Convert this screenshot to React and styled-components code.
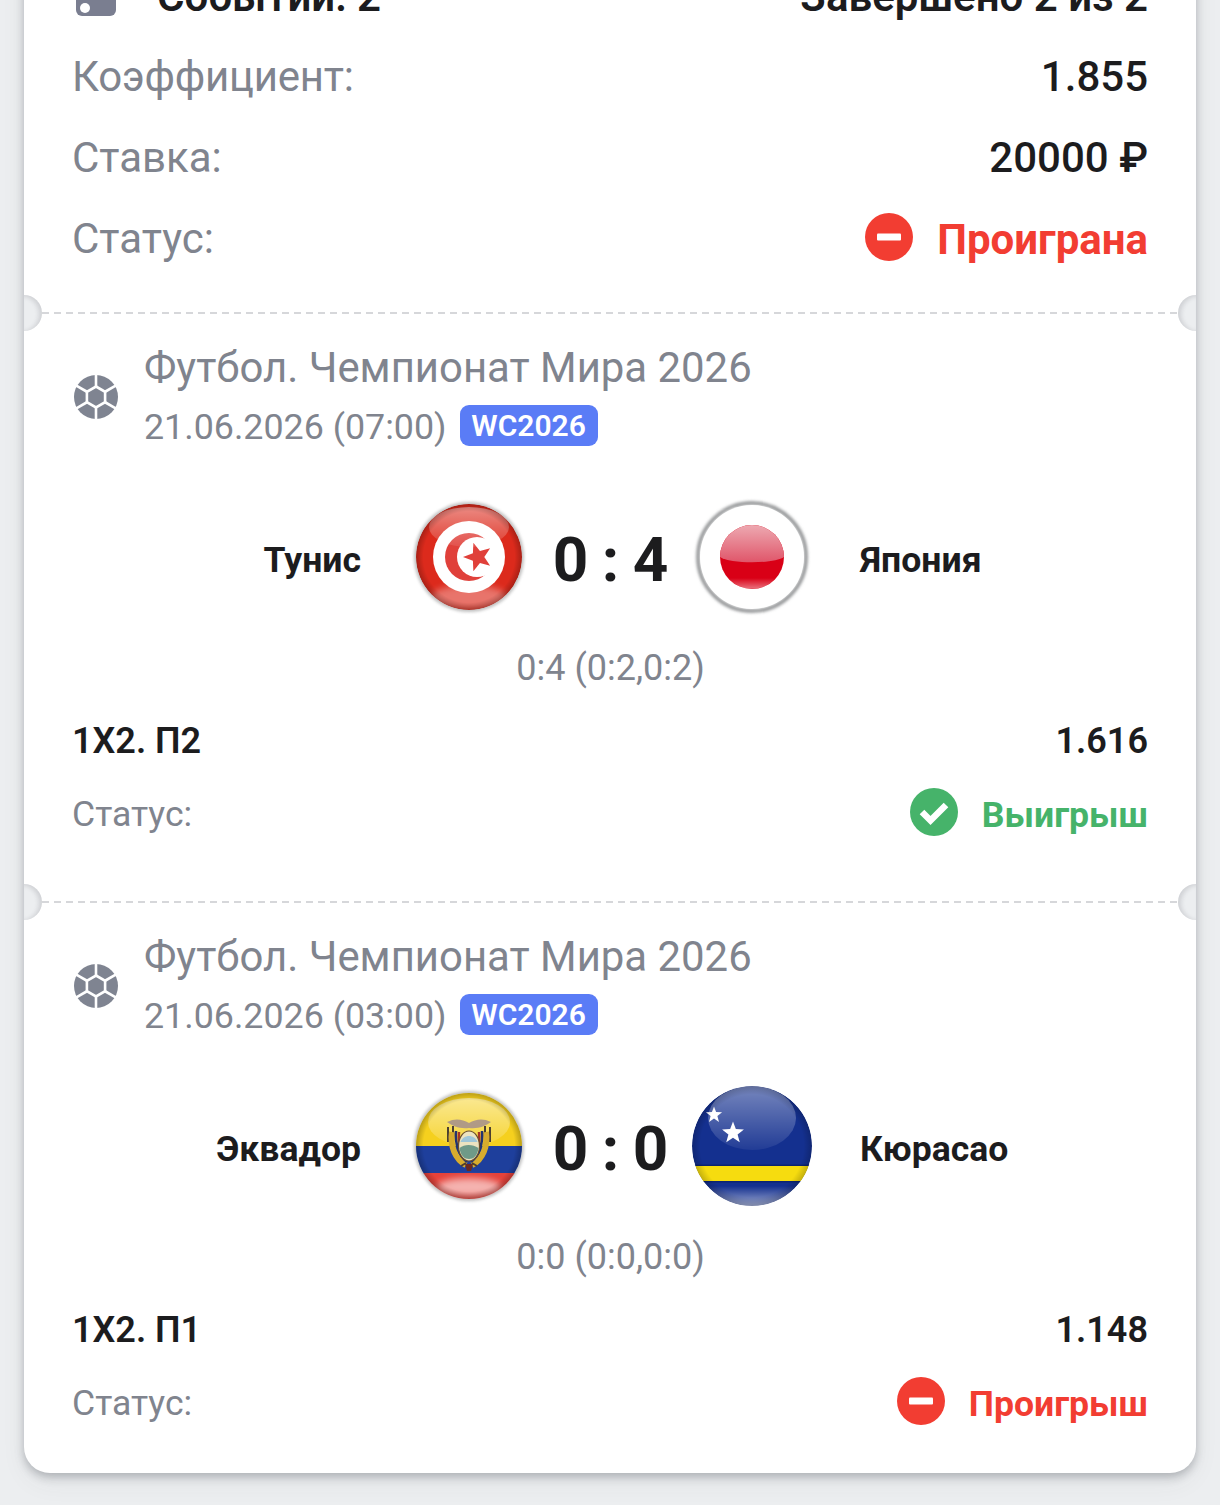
import React from "react";
import styled, { createGlobalStyle } from "styled-components";

const Global = createGlobalStyle`
  html, body { margin: 0; padding: 0; background: #eceef0; height: 1505px; overflow: hidden; }
  body { font-family: Roboto, "Noto Sans", sans-serif; }
`;
const Page = styled.div`
  width: 1220px; height: 1505px; box-sizing: border-box; padding: 0 24px; overflow: hidden; background: #eceef0;
`;
const Card = styled.div`
  margin-top: -46px; width: 1172px; height: 1519px; background: #fff;
  border-radius: 0 0 26px 26px; box-shadow: 0 4px 10px rgba(60,64,75,.32), 0 10px 26px rgba(60,64,75,.06);
`;
const Summary = styled.section`
  padding: 0 48px 0 49px; height: 358px; box-sizing: border-box;
`;
const TopRow = styled.div`
  display: flex; align-items: center; justify-content: space-between; height: 82px;
`;
const TopLeft = styled.div`display: flex; align-items: center; gap: 41px; padding-left: 3px;`;
const TopText = styled.span`font-size: 42px; font-weight: 600; color: #1c1c1e; padding-top: 2px;`;
const Ticket = styled.div`
  width: 40px; height: 40px; border-radius: 6px; background: #7a7e90; position: relative; margin-top: 2px;
  &::after { content: ""; position: absolute; left: 4px; bottom: 3px; width: 10px; height: 10px; border-radius: 50%; background: #fff; }
`;
const InfoRow = styled.div`
  display: flex; align-items: center; justify-content: space-between; height: 81px;
`;
const InfoLabel = styled.span`font-size: 42px; color: #80848e; margin-left: -1px; letter-spacing: ${p => p.$tight ? "-.2px" : "0"};`;
const InfoValue = styled.span`font-size: 42px; font-weight: 500; color: #1c1c1e;`;
const Status = styled.div`display: flex; align-items: center; gap: 24px;`;
const StatusText = styled.span`
  font-size: ${p => p.$size}px; font-weight: 700; color: ${p => p.$color}; padding-top: ${p => p.$drop}px;
`;
const StatusIcon = styled.svg`display: block; width: 48px; height: 48px; margin-bottom: 4px; flex: none;`;
const Divider = styled.div`
  height: 2px; margin: 0; position: relative;
  background: repeating-linear-gradient(90deg, #d6d7da 0 7px, transparent 7px 12px);
  background-size: calc(100% - 36px) 2px; background-position: 18px 0; background-repeat: no-repeat;
`;
const Notch = styled.span`
  position: absolute; top: -17px; width: 18px; height: 36px; background: #eceef0;
  ${p => p.$right
    ? "right: 0; border-radius: 18px 0 0 18px; box-shadow: inset 3px 1px 4px rgba(60,64,75,.16);"
    : "left: 0; border-radius: 0 18px 18px 0; box-shadow: inset -3px 1px 4px rgba(60,64,75,.16);"}
`;
const Event = styled.section`
  box-sizing: border-box; height: ${p => p.$h}px; padding: 25px 48px 0 49px;
`;
const Head = styled.div`display: flex; align-items: center; gap: 26px; height: 116px; padding-left: 1px;`;
const HeadText = styled.div`display: flex; flex-direction: column;`;
const Title = styled.div`font-size: 41.9px; line-height: 58px; color: #80848e; white-space: nowrap;`;
const DateLine = styled.div`display: flex; align-items: center; gap: 13px; height: 58px;`;
const DateText = styled.span`font-size: 35.8px; color: #80848e; padding-top: 2px;`;
const Badge = styled.span`
  display: inline-flex; align-items: center; justify-content: center; width: 138px; height: 41px; margin-bottom: 2px;
  background: #5a7cf6; border-radius: 9px; color: #fff; font-size: 30px; font-weight: 600;
`;
const Match = styled.div`
  display: grid; grid-template-columns: 1fr 120px 163px 120px 1fr; align-items: center;
  height: 120px; margin-top: 42px;
`;
const Team = styled.div`
  font-size: 35.6px; font-weight: 700; color: #1c1c1e; white-space: nowrap; padding-top: 6px;
  ${p => p.$right ? "padding-left: 48px;" : "padding-right: 48px; text-align: right;"}
`;
const Score = styled.div`font-size: 62px; font-weight: 700; color: #1c1c1e; text-align: center; white-space: nowrap; padding-top: 5px; word-spacing: -2px;`;
const Sub = styled.div`
  text-align: center; font-size: 36px; line-height: 40px; color: #80848e; margin-top: 31px;
`;
const Pick = styled.div`
  display: flex; justify-content: space-between; align-items: center; height: 60px; margin-top: 23px; margin-left: -1px;
  font-size: 36px; font-weight: 600; color: #1c1c1e;
`;
const StatusRow = styled.div`
  display: flex; justify-content: space-between; align-items: center; height: 60px; margin-top: 13px;
`;
const StatusLabel = styled.span`font-size: 35.6px; color: #80848e; margin-left: -1px;`;
const FlagSvg = styled.svg`display: block; width: 120px; height: 120px;`;

const RED = "#f23d32";
const GREEN = "#46b36a";

const MinusIcon = () => (
  <StatusIcon viewBox="0 0 48 48">
    <circle cx="24" cy="24" r="24" fill={RED} />
    <rect x="12" y="20.5" width="24" height="7" rx="1" fill="#fff" />
  </StatusIcon>
);
const CheckIcon = () => (
  <StatusIcon viewBox="0 0 48 48">
    <circle cx="24" cy="24" r="24" fill={GREEN} />
    <path d="M12 24l8.5 8.5L36 17" fill="none" stroke="#fff" strokeWidth="6.5" />
  </StatusIcon>
);
const hexPts = [[0,-10.5],[9.1,-5.25],[9.1,5.25],[0,10.5],[-9.1,5.25],[-9.1,-5.25]];
const Ball = () => (
  <svg width="44" height="44" viewBox="-22 -22 44 44" style={{ flex: "none" }}>
    <circle r="22" fill="#7f8491" />
    {hexPts.map(([x, y], i) => (
      <line key={i} x1={x} y1={y} x2={x * 2.4} y2={y * 2.4} stroke="#fff" strokeWidth="2.6" />
    ))}
    <polygon points={hexPts.map(p => p.join(",")).join(" ")} fill="#7f8491" stroke="#fff" strokeWidth="2.6" />
  </svg>
);

const star = (cx, cy, r, start = -Math.PI / 2) => {
  const pts = [];
  for (let i = 0; i < 10; i++) {
    const a = start + (i * Math.PI) / 5;
    const rr = i % 2 ? r * 0.42 : r;
    pts.push(`${(cx + rr * Math.cos(a)).toFixed(2)},${(cy + rr * Math.sin(a)).toFixed(2)}`);
  }
  return pts.join(" ");
};

const Defs = ({ id }) => (
  <defs>
    <linearGradient id={`${id}g`} x1="0" y1="0" x2="0" y2="1">
      <stop offset="0" stopColor="#fff" stopOpacity=".6" />
      <stop offset="1" stopColor="#fff" stopOpacity=".12" />
    </linearGradient>
    <radialGradient id={`${id}e`} cx=".5" cy=".5" r=".5">
      <stop offset=".86" stopColor="#000" stopOpacity="0" />
      <stop offset="1" stopColor="#000" stopOpacity=".24" />
    </radialGradient>
    <linearGradient id={`${id}b`} x1="0" y1="0" x2="0" y2="1">
      <stop offset="0" stopColor="#fff" stopOpacity="0" />
      <stop offset="1" stopColor="#fff" stopOpacity=".45" />
    </linearGradient>
    <filter id={`${id}s`} x="-20%" y="-20%" width="140%" height="140%">
      <feGaussianBlur stdDeviation="1.8" />
    </filter>
    <filter id={`${id}t`} x="-30%" y="-30%" width="160%" height="160%">
      <feGaussianBlur stdDeviation="3.5" />
    </filter>
    <clipPath id={`${id}c`}><circle cx="60" cy="60" r="53" /></clipPath>
  </defs>
);

const Tunisia = () => (
  <FlagSvg viewBox="0 0 120 120">
    <Defs id="tn" />
    <circle cx="60" cy="60" r="55" fill="#8f8f8f" opacity=".55" filter="url(#tns)" />
    <g clipPath="url(#tnc)">
      <circle cx="60" cy="60" r="53" fill="#dc2a1c" />
      <circle cx="60" cy="60" r="36" fill="#fff" />
      <circle cx="60" cy="60" r="24" fill="#e0403a" />
      <circle cx="68" cy="60" r="20" fill="#fff" />
      <polygon points={star(69, 60, 15, Math.PI)} fill="#e0403a" />
      <ellipse cx="60" cy="30" rx="40" ry="20" fill="url(#tng)" opacity=".75" />
      <ellipse cx="60" cy="100" rx="38" ry="12" fill="#fff" opacity=".35" filter="url(#tnt)" />
      <circle cx="60" cy="60" r="53" fill="url(#tne)" />
    </g>
  </FlagSvg>
);
const Japan = () => (
  <FlagSvg viewBox="0 0 120 120">
    <Defs id="jp" />
    <defs>
      <linearGradient id="jpd" x1="0" y1="0" x2="0" y2="1">
        <stop offset="0" stopColor="#eda9b1" />
        <stop offset="1" stopColor="#e0566a" />
      </linearGradient>
    </defs>
    <circle cx="60" cy="60" r="54" fill="none" stroke="#8e9092" strokeWidth="3.5" filter="url(#jps)" />
    <circle cx="60" cy="60" r="52" fill="#fff" />
    <circle cx="60" cy="60" r="32" fill="#d90016" />
    <path d="M28 60a32 32 0 0 1 64 0c-10 7 -54 7 -64 0z" fill="url(#jpd)" />
    <path d="M36 81a32 32 0 0 0 48 0z" fill="url(#jpb)" />
  </FlagSvg>
);
const Ecuador = () => (
  <FlagSvg viewBox="0 0 120 120">
    <Defs id="ec" />
    <circle cx="60" cy="60" r="55" fill="#8f8f8f" opacity=".55" filter="url(#ecs)" />
    <g clipPath="url(#ecc)">
      <rect x="0" y="0" width="120" height="60" fill="#f5d01e" />
      <rect x="0" y="60" width="120" height="28" fill="#1e3f9c" />
      <rect x="0" y="87" width="120" height="34" fill="#e5423a" />
      <ellipse cx="60" cy="36" rx="41" ry="24" fill="url(#ecg)" opacity=".85" />
      <ellipse cx="60" cy="101" rx="32" ry="9" fill="#fff" opacity=".6" filter="url(#ect)" />
      {/* coat of arms */}
      <path d="M38 36c8-4 15-3 22 1 7-4 14-5 22-1-6 4-12 7-22 6-10 1-16-2-22-6z" fill="#b09a86" />
      <path d="M39 41v15M44 40v10M81 41v15M76 40v10" stroke="#4c3f30" strokeWidth="2" fill="none" />
      <path d="M43 46C41 60 46 73 57 79M77 46C79 60 74 73 63 79" stroke="#d7ac2e" strokeWidth="6" fill="none" />
      <path d="M47 45C46 58 50 70 58 76M73 45C74 58 70 70 62 76" stroke="#24336e" strokeWidth="2.5" fill="none" />
      <path d="M50 46C49 58 52 68 59 74M70 46C71 58 68 68 61 74" stroke="#a53524" strokeWidth="2.5" fill="none" />
      <ellipse cx="60" cy="60" rx="10.5" ry="15" fill="#ece3c0" stroke="#6a4f2c" strokeWidth="1.2" />
      <path d="M51.5 56c3-8 14-8 17 0z" fill="#9fc6d8" />
      <path d="M50.5 62c5-4 13-4 19 0-1 8-5 11-9.5 11S51.5 70 50.5 62z" fill="#6f9a88" />
      <path d="M56 78h8l-2 7h-4z" fill="#6a2a20" />
      <path d="M52 80l5-3M68 80l-5-3" stroke="#4c3f30" strokeWidth="2" />
      <circle cx="60" cy="60" r="53" fill="url(#ece)" />
    </g>
  </FlagSvg>
);
const Curacao = () => (
  <FlagSvg viewBox="0 0 120 120">
    <defs>
      <radialGradient id="cwe" cx=".5" cy=".5" r=".5">
        <stop offset=".86" stopColor="#000" stopOpacity="0" />
        <stop offset="1" stopColor="#000" stopOpacity=".2" />
      </radialGradient>
      <linearGradient id="cwg" x1="0" y1="0" x2="0" y2="1">
        <stop offset="0" stopColor="#fff" stopOpacity=".42" />
        <stop offset="1" stopColor="#fff" stopOpacity=".06" />
      </linearGradient>
      <linearGradient id="cwb" x1="0" y1="0" x2="0" y2="1">
        <stop offset="0" stopColor="#fff" stopOpacity="0" />
        <stop offset="1" stopColor="#fff" stopOpacity=".6" />
      </linearGradient>
      <clipPath id="cwc"><circle cx="60" cy="60" r="60" /></clipPath>
    </defs>
    <g clipPath="url(#cwc)">
      <circle cx="60" cy="60" r="60" fill="#14308f" />
      <ellipse cx="60" cy="32" rx="44" ry="32" fill="url(#cwg)" />
      <polygon points={star(22, 29, 8.5)} fill="#fff" />
      <polygon points={star(41, 47, 11.5)} fill="#fff" />
      <rect x="0" y="80" width="120" height="15" fill="#f6dc0f" />
      <rect x="0" y="78.5" width="120" height="1.5" fill="#0c2470" />
      <rect x="0" y="95" width="120" height="1.5" fill="#0c2470" />
      <rect x="10" y="100" width="100" height="20" fill="url(#cwb)" />
      <circle cx="60" cy="60" r="60" fill="url(#cwe)" />
    </g>
  </FlagSvg>
);

const Bet = ({ h, date, home, away, HomeFlag, AwayFlag, score, detail, pick, odd, win }) => (
  <Event $h={h}>
    <Head>
      <Ball />
      <HeadText>
        <Title>Футбол. Чемпионат Мира 2026</Title>
        <DateLine>
          <DateText>{date}</DateText>
          <Badge>WC2026</Badge>
        </DateLine>
      </HeadText>
    </Head>
    <Match>
      <Team>{home}</Team>
      <HomeFlag />
      <Score>{score}</Score>
      <AwayFlag />
      <Team $right>{away}</Team>
    </Match>
    <Sub>{detail}</Sub>
    <Pick><span>{pick}</span><span>{odd}</span></Pick>
    <StatusRow>
      <StatusLabel>Статус:</StatusLabel>
      <Status>
        {win ? <CheckIcon /> : <MinusIcon />}
        <StatusText $size={35.6} $drop={1} $color={win ? GREEN : RED}>{win ? "Выигрыш" : "Проигрыш"}</StatusText>
      </Status>
    </StatusRow>
  </Event>
);

const Sep = () => (
  <Divider><Notch /><Notch $right /></Divider>
);

export default function App() {
  return (
    <Page>
      <Global />
      <Card>
        <Summary>
          <TopRow>
            <TopLeft><Ticket /><TopText>Событий: 2</TopText></TopLeft>
            <TopText>Завершено 2 из 2</TopText>
          </TopRow>
          <InfoRow><InfoLabel $tight>Коэффициент:</InfoLabel><InfoValue>1.855</InfoValue></InfoRow>
          <InfoRow><InfoLabel>Ставка:</InfoLabel><InfoValue>20000 ₽</InfoValue></InfoRow>
          <InfoRow>
            <InfoLabel>Статус:</InfoLabel>
            <Status>
              <MinusIcon />
              <StatusText $size={42} $drop={2} $color={RED}>Проиграна</StatusText>
            </Status>
          </InfoRow>
        </Summary>
        <Sep />
        <Bet h={587} date="21.06.2026 (07:00)" home="Тунис" away="Япония" HomeFlag={Tunisia} AwayFlag={Japan}
          score="0 : 4" detail="0:4 (0:2,0:2)" pick="1X2. П2" odd="1.616" win />
        <Sep />
        <Bet h={570} date="21.06.2026 (03:00)" home="Эквадор" away="Кюрасао" HomeFlag={Ecuador} AwayFlag={Curacao}
          score="0 : 0" detail="0:0 (0:0,0:0)" pick="1X2. П1" odd="1.148" />
      </Card>
    </Page>
  );
}
